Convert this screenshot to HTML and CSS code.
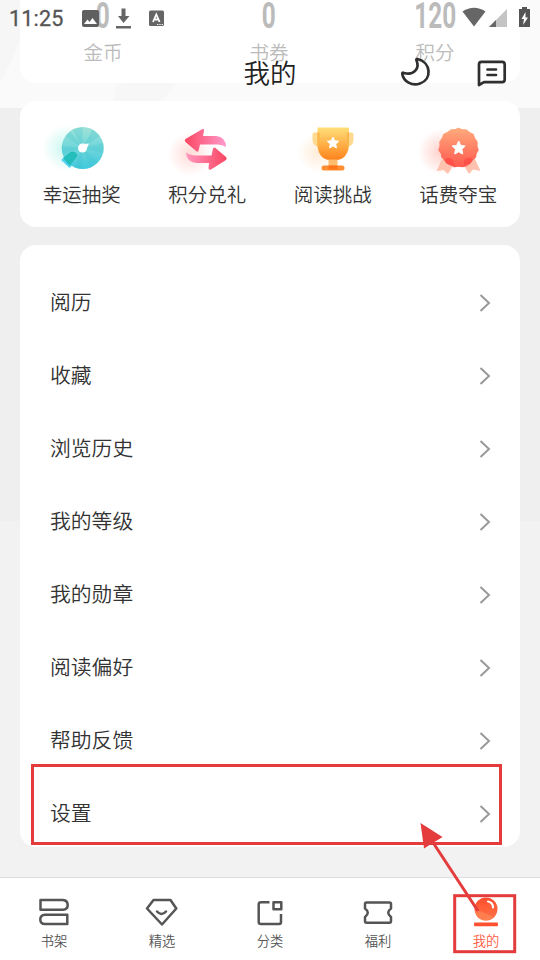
FILE: index.html
```html
<!DOCTYPE html>
<html lang="zh-CN">
<head>
<meta charset="utf-8">
<title>我的</title>
<link rel="stylesheet" href="styles.css">
</head>
<body>
<div class="screen">
  <svg class="backdrop" width="540" height="108" viewBox="0 0 540 108"><path d="M0 0H20V38Q13 61 0 82Z" fill="#f6f6f6"/><path d="M115 87L132 78H180L156 108H115Z" fill="#f7f7f7"/></svg>
  <header class="header">
    <div class="statusbar">
      <span class="time">11:25</span>
      <svg class="notices" width="84" height="24" viewBox="80 6 84 24">
        <path fill="#5f5f5f" fill-rule="evenodd" d="M84 10H97Q99 10 99 12V25Q99 27 97 27H84Q82 27 82 25V12Q82 10 84 10ZM84 24H97L92.5 18L89.5 22L87.5 19.5Z"/>
        <path fill="#666" d="M121.500 8.500H125.500V16H129.500L123.500 23L118 16H121.500ZM116 26H131V28.500H116Z"/>
        <rect x="149" y="10.500" width="15" height="15.500" rx="1.500" fill="#666"/>
        <path d="M153 22L156.300 14.500L159.600 22M154.300 19.500H158.300" fill="none" stroke="#fff" stroke-width="1.800"/>
        <path d="M157 24.500H163" stroke="#fff" stroke-width="1.200" stroke-dasharray="1.300 1"/>
      </svg>
      <svg class="signals" width="70" height="24" viewBox="462 6 70 24">
        <path fill="#666" d="M462.500 11.500Q474 4 485.500 11.500L474 26.500Z"/>
        <path fill="#c4c4c4" d="M507 9V27H489Z"/><path fill="#666" d="M496 20V27H489Z"/>
        <path fill="#555" d="M522 7H527V9H530V27H519V9H522Z"/>
        <path fill="#fff" d="M525.500 12L521.500 19H524L523 25L528 17.500H525.500Z"/>
      </svg>
    </div>
    <div class="titlebar">
      <h1>我的</h1>
      <svg class="actions" width="112" height="34" viewBox="398 55.500 112 34" fill="none" stroke="#2f2f2f" stroke-width="2.700" stroke-linejoin="round" stroke-linecap="round">
        <path d="M417.500 59.500C431 62.500 432.500 80 420 84C412 87 403.500 82 402.300 74.500C402 73 403 73 404 73.500C414 76.500 420 68.500 416.500 61C416 60 416.500 59.300 417.500 59.500Z"/>
        <path d="M481.500 62.300H502Q504.700 62.300 504.700 65V80Q504.700 82.600 502 82.600H484L479 85.500V65Q479 62.300 481.500 62.300Z"/>
        <path d="M487.500 70H496M487.500 75.500H496"/>
      </svg>
    </div>
  </header>

  <main class="content">
    <section class="card stats">
      <div class="stat"><b>0</b><span>金币</span></div>
      <div class="stat"><b>0</b><span>书券</span></div>
      <div class="stat"><b>120</b><span>积分</span></div>
    </section>

    <section class="card perks">
      <div class="perk">
        <svg width="80" height="64" viewBox="41.500 117 80 64">
          <defs><radialGradient id="tealGlow"><stop stop-color="#78ecd8" stop-opacity=".4"/><stop offset="1" stop-color="#78ecd8" stop-opacity="0"/></radialGradient>
          <linearGradient id="teal" x2="0" y2="1"><stop stop-color="#a0e3d8"/><stop offset="1" stop-color="#3fc9dd"/></linearGradient></defs>
          <circle cx="65" cy="148" r="23" fill="url(#tealGlow)"/>
          <path d="M60.500 160L69 152L77 161L69 168Z" fill="#5bd4f0"/>
          <circle cx="82.200" cy="148" r="21" fill="url(#teal)"/>
          <path fill="#36bfcc" opacity=".25" d="M82 148L72 129.500L82 127ZM82 148L92 129.500L99 136ZM82 148L103 143V153ZM82 148L98 162L90 168ZM82 148L82 169L74 167ZM82 148L62 154L61 146ZM82 148L65 136L70 131Z"/>
          <path d="M62.500 158L70 152Q76 151 77 156L69 166Z" fill="#16b9b3" opacity=".8"/>
          <circle cx="82" cy="148" r="4.500" fill="#fff"/><path d="M83 144L88.500 143.500L86 149Z" fill="#fff"/>
        </svg>
        <span>幸运抽奖</span>
      </div>
      <div class="perk">
        <svg width="80" height="64" viewBox="167 117 80 64">
          <defs><radialGradient id="roseGlow"><stop stop-color="#ff8578" stop-opacity=".3"/><stop offset="1" stop-color="#ff8578" stop-opacity="0"/></radialGradient>
          <linearGradient id="rose1"><stop stop-color="#fb4661"/><stop offset="1" stop-color="#ff9acb"/></linearGradient>
          <linearGradient id="rose2"><stop stop-color="#ff97bf"/><stop offset="1" stop-color="#fb4661"/></linearGradient></defs>
          <circle cx="190" cy="154" r="22" fill="url(#roseGlow)"/>
          <path fill="url(#rose1)" d="M185.500 139L202.500 129Q204.500 128.500 204 131L203 136H216Q226 137 226 147Q222 144 216 144.500H200L198.500 151Q197.500 152.500 196 151L185.500 142Q184 140.500 185.500 139Z"/>
          <path fill="url(#rose2)" d="M186 152.500Q190 155.500 196 155.500H211.500L213 148.500Q214 147 215.500 148L226 157Q227.500 158.500 226 160L211 169.500Q208.500 170.500 208.500 168L209 163H197Q187 163 186 152.500Z"/>
        </svg>
        <span>积分兑礼</span>
      </div>
      <div class="perk">
        <svg width="80" height="64" viewBox="292.500 117.500 80 64">
          <defs><radialGradient id="goldGlow"><stop stop-color="#ffc078" stop-opacity=".28"/><stop offset="1" stop-color="#ffc078" stop-opacity="0"/></radialGradient>
          <linearGradient id="gold" x2="0" y2="1"><stop stop-color="#ffdf78"/><stop offset="1" stop-color="#ff8119"/></linearGradient></defs>
          <circle cx="317" cy="153" r="20" fill="url(#goldGlow)"/>
          <path d="M314 133H319V147Q312 147 312 140V135Q312 133 314 133ZM346 133H351Q353 133 353 135V140Q353 147 346 147Z" fill="#ffd98d"/>
          <path d="M317 128H348Q348.500 128 348.500 129V146Q347 161 332.700 161Q318 161 317 146Z" fill="url(#gold)"/>
          <path d="M317 133H319V148H317ZM346.500 133H348.500V148H346.500Z" fill="#f9b44b"/>
          <path d="M328 160H337V167H328Z" fill="#ffbd70"/><rect x="321" y="166" width="23" height="5" rx="2.500" fill="#ff8d32"/><path d="M328 166H337V170H328Z" fill="#ff761a"/>
          <path fill="#fff" stroke="#fff" stroke-linejoin="round" d="M332.500 137.500L334.200 141.200L338.200 141.700L335.200 144.500L336 148.500L332.500 146.500L329 148.500L329.800 144.500L326.800 141.700L330.800 141.200Z"/>
        </svg>
        <span>阅读挑战</span>
      </div>
      <div class="perk">
        <svg width="80" height="64" viewBox="418 117 80 64">
          <defs><radialGradient id="redGlow"><stop stop-color="#ff7868" stop-opacity=".35"/><stop offset="1" stop-color="#ff7868" stop-opacity="0"/></radialGradient>
          <linearGradient id="coral" x2="0" y2="1"><stop stop-color="#ffaa7d"/><stop offset="1" stop-color="#ff5a4f"/></linearGradient></defs>
          <circle cx="441" cy="152" r="23" fill="url(#redGlow)"/>
          <path d="M443 157L436.500 171L443.500 170L448 174L454 164ZM474 157L480.500 171L473 169.500L469 174L463 164Z" fill="#ffc2ae"/>
          <path fill="url(#coral)" stroke="url(#coral)" stroke-width="1.500" stroke-linejoin="round" d="M458.500 128.500Q462 130.500 466 130Q469 133 473 134.500Q474 139 477 142Q476 146 478 150Q475.500 153 475.500 157Q472 159.500 470 163Q466 163.500 463 166.500Q458.500 165.500 454 166.500Q451 163.500 447 163Q445.500 159.500 442 157Q442 153 439 150Q441 146 440 142Q443 139 444 134.500Q448 133 451 130Q455 130.500 458.500 128.500Z"/>
          <path d="M444 160Q448 156 453 160L454 166Q447 166 444 160ZM464 160Q469 156 473 159Q470 166 464 167Z" fill="#ff4740" opacity=".65"/>
          <path fill="#fff" stroke="#fff" stroke-linejoin="round" d="M458.700 141L460.700 145.400L465.200 146L461.900 149.200L462.700 154L458.700 151.800L454.700 154L455.500 149.200L452.200 146L456.700 145.400Z"/>
        </svg>
        <span>话费夺宝</span>
      </div>
    </section>

    <section class="card menu">
      <div class="row"><span>阅历</span><svg class="chevron" viewBox="0 0 12 20"><path d="M1.500 2L10 10L1.500 18"/></svg></div>
      <div class="row"><span>收藏</span><svg class="chevron" viewBox="0 0 12 20"><path d="M1.500 2L10 10L1.500 18"/></svg></div>
      <div class="row"><span>浏览历史</span><svg class="chevron" viewBox="0 0 12 20"><path d="M1.500 2L10 10L1.500 18"/></svg></div>
      <div class="row"><span>我的等级</span><svg class="chevron" viewBox="0 0 12 20"><path d="M1.500 2L10 10L1.500 18"/></svg></div>
      <div class="row"><span>我的勋章</span><svg class="chevron" viewBox="0 0 12 20"><path d="M1.500 2L10 10L1.500 18"/></svg></div>
      <div class="row"><span>阅读偏好</span><svg class="chevron" viewBox="0 0 12 20"><path d="M1.500 2L10 10L1.500 18"/></svg></div>
      <div class="row"><span>帮助反馈</span><svg class="chevron" viewBox="0 0 12 20"><path d="M1.500 2L10 10L1.500 18"/></svg></div>
      <div class="row"><span>设置</span><svg class="chevron" viewBox="0 0 12 20"><path d="M1.500 2L10 10L1.500 18"/></svg></div>
    </section>
  </main>

  <nav class="tabs">
    <div class="tab"><svg viewBox="36 895 36 34"><path d="M40.500 900H63Q67.700 900.500 67.700 905T63 909.700H40.500ZM67.300 914.700H45Q40.300 915 40.300 919.500T45 924H67.300Z"/></svg><span>书架</span></div>
    <div class="tab"><svg viewBox="144 895 36 34"><path d="M153.500 900H170.500L176.300 908.500L162 924.500L147 908.500ZM157 911.500Q161.500 916.500 166 911.500" stroke-linecap="round"/></svg><span>精选</span></div>
    <div class="tab"><svg viewBox="252 895 36 34"><path d="M269.500 902.300H261Q258.700 902.300 258.700 904.500V922Q258.700 924 261 924H279Q281 924 281 922V914M273.500 902.300H281.300V909.300H273.500Z"/></svg><span>分类</span></div>
    <div class="tab"><svg viewBox="360 895 36 34"><path d="M366.500 902.500H389.500Q391 902.500 391 904V908.500Q385.500 912.500 391 917V921Q391 922.700 389.500 922.700H366.500Q365 922.700 365 921V917Q370.500 912.500 365 908.500V904Q365 902.500 366.500 902.500Z"/></svg><span>福利</span></div>
    <div class="tab active"><svg viewBox="468 895 36 34"><defs><linearGradient id="ball" x2="0" y2="1"><stop stop-color="#ff4d2d"/><stop offset="1" stop-color="#ff7548"/></linearGradient></defs><circle cx="486" cy="909" r="11.500" fill="url(#ball)" stroke="none"/><path d="M475 911Q476 920 486 920.500Q491 920 494 917L480 911Z" fill="#ff8959" stroke="none" opacity=".6"/><path d="M488 901.500Q493 902.500 493 907.500" stroke="#fff" stroke-width="2.200" stroke-linecap="round"/><rect x="474" y="922.500" width="24" height="3.700" rx="1" fill="#ff512f" stroke="none"/></svg><span>我的</span></div>
  </nav>

  <svg class="annotations" width="540" height="960" viewBox="0 0 540 960" fill="none" stroke="#e43c3c" stroke-width="3">
    <rect x="32.500" y="765.500" width="468" height="78"/>
    <rect x="454.700" y="895.700" width="60" height="56"/>
    <path d="M478 911L432 841"/>
    <path d="M420.500 823L442.500 837L424 848.500Z" fill="#e43c3c" stroke="none"/>
  </svg>
</div>
</body>
</html>
```
FILE: styles.css
```css
* { box-sizing: border-box; }
body {
  margin: 0;
  font-family: "Noto Sans CJK SC", sans-serif;
  font-weight: 350;
  color: #333;
}
.screen {
  position: relative;
  display: flex;
  flex-direction: column;
  width: 540px;
  height: 960px;
  overflow: hidden;
  background: linear-gradient(#fafafa 108px, #efefef 108px, #efefef 521px, #f2f2f2 521px);
}
svg { display: block; flex: none; }

.backdrop { position: absolute; top: 0; left: 0; }
.header { position: absolute; inset: 0 0 auto; z-index: 2; }
.statusbar {
  display: flex;
  height: 36px;
  padding: 6px 8px 0 9px;
}
.time {
  width: 71px;
  font: 400 21.500px/25px Roboto, sans-serif;
  letter-spacing: .2px;
  color: #555;
  -webkit-text-stroke: .3px #555;
}
.signals { margin-left: auto; }
.titlebar {
  display: grid;
  grid-template-columns: 1fr auto 1fr;
  align-items: center;
  height: 71px;
  padding-right: 30px;
  padding-left: 30px;
}
.titlebar h1 {
  grid-column: 2;
  margin: 0;
  font-size: 26.500px;
  font-weight: 350;
  line-height: 40px;
  color: #222;
}
.actions { justify-self: end; }

.content {
  position: relative;
  display: flex;
  flex: 1;
  flex-direction: column;
  gap: 18px;
  padding: 0 20px;
}
.card { background: #fff; border-radius: 16px; }
.stats {
  display: grid;
  grid-template-columns: repeat(3, 1fr);
  height: 83px;
  padding-right: 2px;
  border-radius: 0 0 16px 16px;
}
.stat {
  display: flex;
  flex-direction: column;
  align-items: center;
  color: #bbb;
}
.stat b {
  height: 38px;
  font: 700 37.500px/30px Roboto, sans-serif;
  transform: scaleX(.65);
}
.stat span { font-size: 19.500px; line-height: 28px; }

.perks {
  display: grid;
  grid-template-columns: repeat(4, 125.500px);
  height: 126px;
  padding-top: 16px;
}
.perk {
  display: flex;
  flex-direction: column;
  align-items: center;
  margin-left: -2px;
  font-size: 19.500px;
  line-height: 25px;
}

.menu { height: 602px; padding: 21px 29px 0 30px; }
.row {
  display: flex;
  align-items: center;
  justify-content: space-between;
  height: 73px;
  font-size: 20.800px;
}
.row span { padding-bottom: 4px; }
.chevron {
  width: 12px;
  height: 20px;
  fill: none;
  stroke: #999;
  stroke-width: 2;
}

.tabs {
  display: grid;
  grid-template-columns: repeat(5, 1fr);
  height: 83px;
  padding-top: 17px;
  background: #fff;
  border-top: 1px solid #ddd;
}
.tab {
  display: flex;
  flex-direction: column;
  align-items: center;
  font-size: 13.300px;
  line-height: 24px;
  color: #555;
}
.tab svg {
  width: 36px;
  height: 34px;
  fill: none;
  stroke: #555;
  stroke-width: 2.500;
  stroke-linejoin: round;
}
.tab.active { color: #ff5a40; }

.annotations { position: absolute; inset: 0; z-index: 3; pointer-events: none; }
```
